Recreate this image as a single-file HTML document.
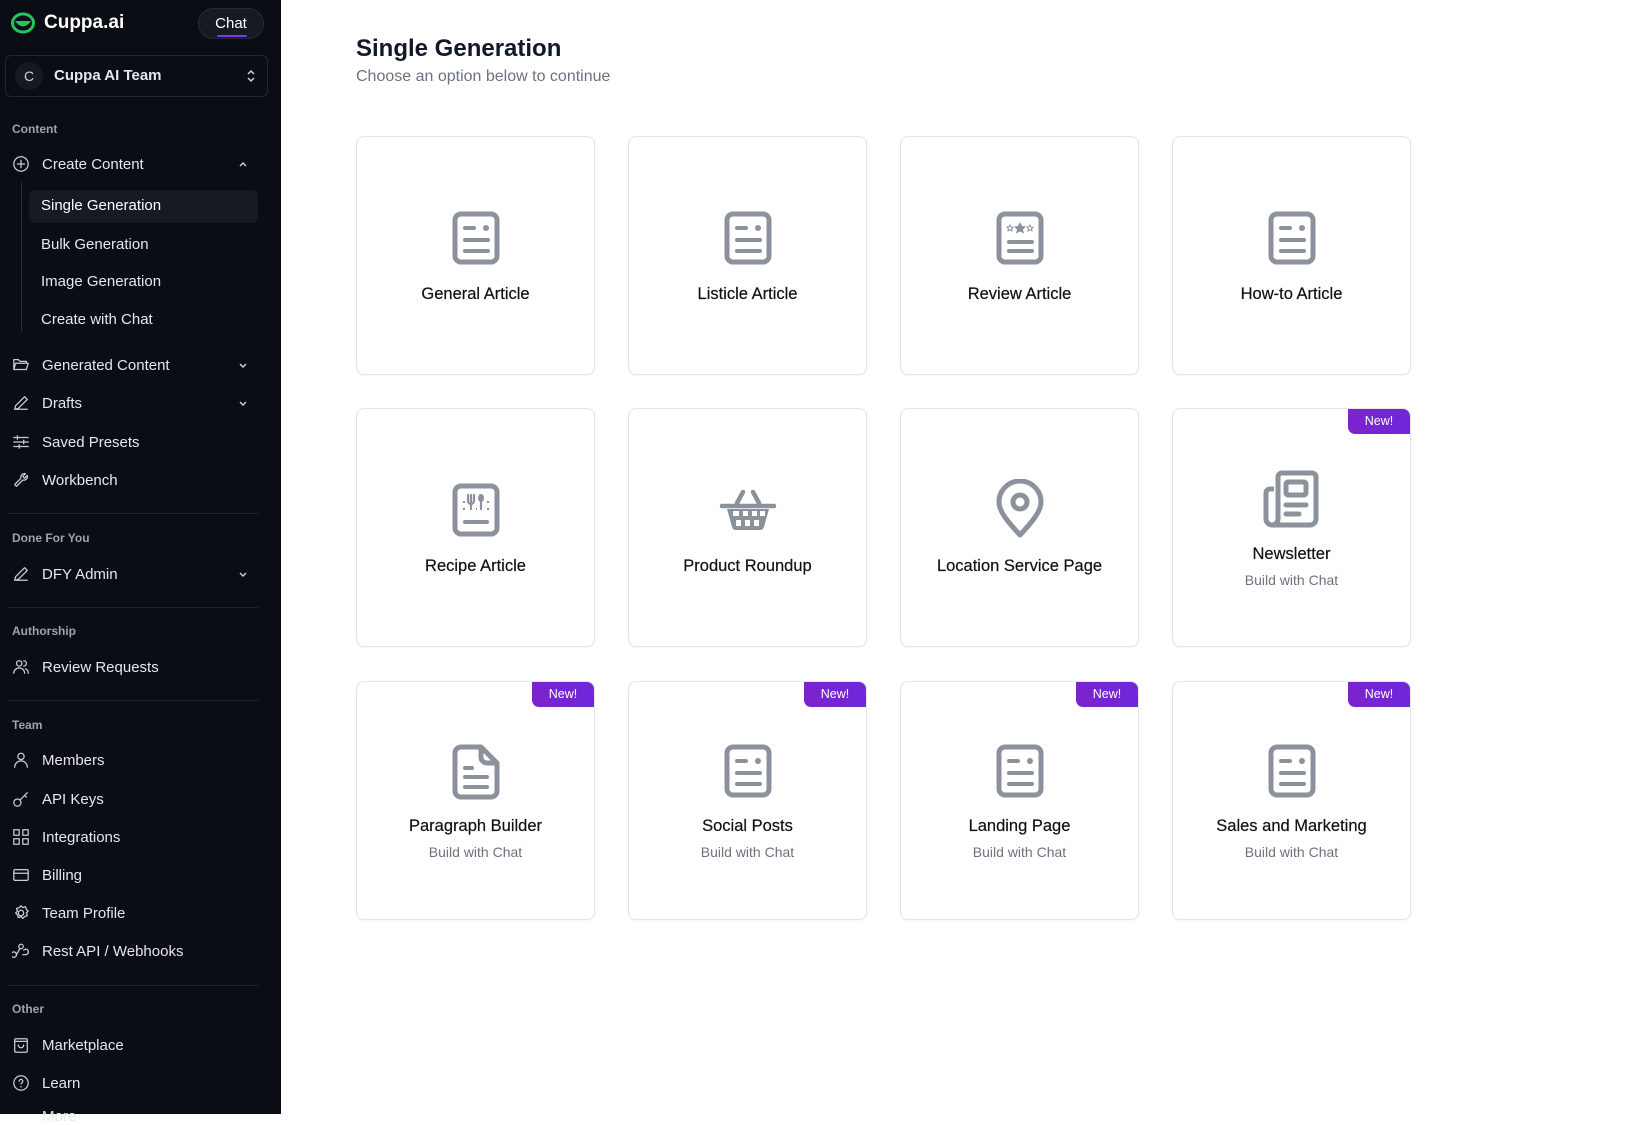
<!DOCTYPE html>
<html><head><meta charset="utf-8"><style>
*{box-sizing:border-box;margin:0;padding:0}
body{width:1634px;height:1114px;overflow:hidden;background:#fff;font-family:"Liberation Sans",sans-serif;position:relative}
#sb{position:absolute;left:0;top:0;width:281px;height:1114px;background:#0a0d14;color:#e5e7eb}
.it{position:absolute;left:12px;height:24px;display:flex;align-items:center;font-size:15px;color:#e5e7eb;transform:translateY(-12px)}
.it svg{width:18px;height:18px;margin-right:12px;stroke:#c9ccd2;fill:none;stroke-width:1.4;stroke-linecap:round;stroke-linejoin:round}
.sec{position:absolute;left:12px;font-size:12px;color:#9ca3af;transform:translateY(-8px);font-weight:bold}
.sub{position:absolute;left:41px;font-size:15px;color:#e5e7eb;transform:translateY(-9px)}
.div{position:absolute;left:8px;width:250px;height:1px;background:#1f2430}
.chev{position:absolute;left:238px;width:10px;height:10px}
.card{position:absolute;width:239px;height:239px;border:1px solid #e3e5e8;border-radius:8px;background:#fff;box-shadow:0 1px 2px rgba(0,0,0,.04);overflow:hidden}
.card svg.ic{position:absolute;left:50%;transform:translateX(-50%)}
.t{position:absolute;left:0;right:0;text-align:center;font-size:16.5px;color:#111;transform:translateY(-10px);-webkit-text-stroke:0.2px #111}
.s{position:absolute;left:0;right:0;text-align:center;font-size:14px;color:#6b7280;transform:translateY(-8px)}
.badge{position:absolute;right:0;top:0;width:62px;height:25px;background:linear-gradient(90deg,#7e22ce,#6d28d9);color:#fff;font-size:12.5px;text-align:center;line-height:25px;border-radius:0 7px 0 7px}
</style></head><body>
<div id="sb">
 <svg style="position:absolute;left:11px;top:12px" width="24" height="22" viewBox="0 0 24 22"><ellipse cx="12" cy="11" rx="10.5" ry="9" fill="none" stroke="#22c55e" stroke-width="3"/><path d="M4 9 Q12 20 20 9 Z" fill="#22c55e"/></svg>
 <div style="position:absolute;left:44px;top:12px;font-size:19px;font-weight:bold;color:#fff">Cuppa.ai</div>
 <div style="position:absolute;left:198px;top:8px;width:66px;height:31px;border-radius:16px;background:#161a23;border:1px solid #262b36;color:#fff;font-size:15px;text-align:center;line-height:29px">Chat<div style="position:absolute;left:18px;bottom:1px;width:30px;height:2px;background:#7c3aed;border-radius:2px"></div></div>
 <div style="position:absolute;left:5px;top:55px;width:263px;height:42px;border:1px solid #232834;border-radius:6px">
  <div style="position:absolute;left:9px;top:6px;width:28px;height:28px;border-radius:14px;background:#151922;color:#cfd2d8;font-size:14px;text-align:center;line-height:28px">C</div>
  <div style="position:absolute;left:48px;top:11px;font-size:15px;font-weight:bold;color:#e5e7eb">Cuppa AI Team</div>
  <svg style="position:absolute;left:240px;top:12px" width="10" height="16" viewBox="0 0 10 16" fill="none" stroke="#cfd2d8" stroke-width="1.5"><path d="M2 6l3-3 3 3M2 10l3 3 3-3"/></svg>
 </div>
 <div class="sec" style="top:130px">Content</div>
 <div class="it" style="top:164px"><svg viewBox="0 0 20 20"><circle cx="10" cy="10" r="8"/><path d="M10 6v8M6 10h8"/></svg>Create Content</div>
 <svg class="chev" style="top:159px" viewBox="0 0 10 10" fill="none" stroke="#cfd2d8" stroke-width="1.4"><path d="M2 7l3-3 3 3"/></svg>
 <div style="position:absolute;left:21px;top:182px;width:1px;height:150px;background:#262b36"></div>
 <div style="position:absolute;left:29px;top:190px;width:229px;height:33px;background:#161a23;border-radius:6px"></div>
 <div class="sub" style="top:206px;color:#fff">Single Generation</div>
 <div class="sub" style="top:245px">Bulk Generation</div>
 <div class="sub" style="top:282px">Image Generation</div>
 <div class="sub" style="top:320px">Create with Chat</div>
 <div class="it" style="top:365px"><svg viewBox="0 0 20 20"><path d="M2 15V4h5l2 2h7v2M2 15l2-7h14l-2 7z"/></svg>Generated Content</div>
 <svg class="chev" style="top:360px" viewBox="0 0 10 10" fill="none" stroke="#cfd2d8" stroke-width="1.4"><path d="M2 4l3 3 3-3"/></svg>
 <div class="it" style="top:403px"><svg viewBox="0 0 20 20"><path d="M3 17l1-4L14 3l3 3L7 16zM3 17h14"/></svg>Drafts</div>
 <svg class="chev" style="top:398px" viewBox="0 0 10 10" fill="none" stroke="#cfd2d8" stroke-width="1.4"><path d="M2 4l3 3 3-3"/></svg>
 <div class="it" style="top:442px"><svg viewBox="0 0 20 20"><path d="M2 5h16M2 10h16M2 15h16M6 3v4M13 8v4M8 13v4"/></svg>Saved Presets</div>
 <div class="it" style="top:480px"><svg viewBox="0 0 20 20"><path d="M17 5l-3 3-2-2 3-3a4 4 0 00-5 5l-7 7 2 2 7-7a4 4 0 005-5z"/></svg>Workbench</div>
 <div class="div" style="top:513px"></div>
 <div class="sec" style="top:539px">Done For You</div>
 <div class="it" style="top:574px"><svg viewBox="0 0 20 20"><path d="M3 17l1-4L14 3l3 3L7 16zM3 17h14"/></svg>DFY Admin</div>
 <svg class="chev" style="top:569px" viewBox="0 0 10 10" fill="none" stroke="#cfd2d8" stroke-width="1.4"><path d="M2 4l3 3 3-3"/></svg>
 <div class="div" style="top:607px"></div>
 <div class="sec" style="top:632px">Authorship</div>
 <div class="it" style="top:667px"><svg viewBox="0 0 20 20"><circle cx="8" cy="6" r="3"/><path d="M2 17a6 6 0 0112 0M13 3a3 3 0 010 6M15 12a5 5 0 013 5"/></svg>Review Requests</div>
 <div class="div" style="top:700px"></div>
 <div class="sec" style="top:726px">Team</div>
 <div class="it" style="top:760px"><svg viewBox="0 0 20 20"><circle cx="10" cy="6" r="3.5"/><path d="M3 18a7 7 0 0114 0"/></svg>Members</div>
 <div class="it" style="top:799px"><svg viewBox="0 0 20 20"><circle cx="6" cy="14" r="4"/><path d="M9 11l8-8M14 6l2 2"/></svg>API Keys</div>
 <div class="it" style="top:837px"><svg viewBox="0 0 20 20"><rect x="2" y="2" width="6" height="6"/><rect x="12" y="2" width="6" height="6"/><rect x="2" y="12" width="6" height="6"/><rect x="12" y="12" width="6" height="6"/></svg>Integrations</div>
 <div class="it" style="top:875px"><svg viewBox="0 0 20 20"><rect x="2" y="4" width="16" height="12" rx="1.5"/><path d="M2 8h16"/></svg>Billing</div>
 <div class="it" style="top:913px"><svg viewBox="0 0 20 20"><circle cx="10" cy="10" r="3"/><path d="M10 2l2 2 3-1 1 3 2 2-2 2 1 3-3 1-2 2-2-2-3 1-1-3-2-2 2-2-1-3 3-1z"/></svg>Team Profile</div>
 <div class="it" style="top:951px"><svg viewBox="0 0 20 20"><circle cx="10" cy="5" r="2.5"/><path d="M9 7l-4 7M5 14a3 3 0 100 .1M12 14h3a3 3 0 10-2-5"/></svg>Rest API / Webhooks</div>
 <div class="div" style="top:985px"></div>
 <div class="sec" style="top:1010px">Other</div>
 <div class="it" style="top:1045px"><svg viewBox="0 0 20 20"><rect x="3" y="3" width="14" height="15" rx="1.5"/><path d="M3 6h14M7 10a3 3 0 006 0"/></svg>Marketplace</div>
 <div class="it" style="top:1083px"><svg viewBox="0 0 20 20"><circle cx="10" cy="10" r="8"/><path d="M8 8a2 2 0 114 0c0 2-2 2-2 3M10 14v.5"/></svg>Learn</div>
 <div style="position:absolute;left:42px;top:1108px;font-size:15px;color:#e5e7eb">More</div>
</div>

<div style="position:absolute;left:356px;top:35px;font-size:24px;font-weight:bold;color:#111827">Single Generation</div>
<div style="position:absolute;left:356px;top:68px;font-size:16px;color:#6b7280">Choose an option below to continue</div>

<svg width="0" height="0" style="position:absolute">
<defs>
<g id="doc"><rect x="3" y="3" width="42" height="48" rx="6" fill="none" stroke="#8b929c" stroke-width="5"/></g>
</defs></svg>

<!-- Row 1 -->
<div class="card" style="left:356px;top:136px"><svg class="ic" style="top:74px" width="48" height="54" viewBox="0 0 48 54"><use href="#doc"/><path d="M13 17h9M13 29h23M13 40h23" stroke="#8b929c" stroke-width="4" stroke-linecap="round"/><circle cx="34" cy="17" r="3" fill="#8b929c"/></svg><div class="t" style="top:158px">General Article</div></div>
<div class="card" style="left:628px;top:136px"><svg class="ic" style="top:74px" width="48" height="54" viewBox="0 0 48 54"><use href="#doc"/><path d="M13 17h9M13 29h23M13 40h23" stroke="#8b929c" stroke-width="4" stroke-linecap="round"/><circle cx="34" cy="17" r="3" fill="#8b929c"/></svg><div class="t" style="top:158px">Listicle Article</div></div>
<div class="card" style="left:900px;top:136px"><svg class="ic" style="top:74px" width="48" height="54" viewBox="0 0 48 54"><use href="#doc"/><path d="M24 11l2 4 4 .5-3 3 1 4-4-2-4 2 1-4-3-3 4-.5z" fill="#8b929c"/><path d="M14 14l1 2 2 .3-1.5 1.5.5 2-2-1-2 1 .5-2L11 16l2-.3zM34 14l1 2 2 .3-1.5 1.5.5 2-2-1-2 1 .5-2L31 16l2-.3z" fill="none" stroke="#8b929c" stroke-width="1"/><path d="M13 31h23M13 40h23" stroke="#8b929c" stroke-width="4" stroke-linecap="round"/></svg><div class="t" style="top:158px">Review Article</div></div>
<div class="card" style="left:1172px;top:136px"><svg class="ic" style="top:74px" width="48" height="54" viewBox="0 0 48 54"><use href="#doc"/><path d="M13 17h9M13 29h23M13 40h23" stroke="#8b929c" stroke-width="4" stroke-linecap="round"/><circle cx="34" cy="17" r="3" fill="#8b929c"/></svg><div class="t" style="top:158px">How-to Article</div></div>

<!-- Row 2 -->
<div class="card" style="left:356px;top:408px"><svg class="ic" style="top:74px" width="48" height="54" viewBox="0 0 48 54"><use href="#doc"/><path d="M19 12v14M16 12v6a3 3 0 006 0v-6M29 17v9" stroke="#8b929c" stroke-width="2.2" fill="none" stroke-linecap="round"/><ellipse cx="29" cy="15" rx="3" ry="4" fill="#8b929c"/><path d="M11 19h2M35 19h2M11 26h2M35 26h2M24 26h1" stroke="#8b929c" stroke-width="2"/><path d="M13 39h22" stroke="#8b929c" stroke-width="4" stroke-linecap="round"/></svg><div class="t" style="top:158px">Recipe Article</div></div>
<div class="card" style="left:628px;top:408px"><svg class="ic" style="top:74px" width="60" height="54" viewBox="0 0 60 54"><path d="M19 20l6-11M41 20l-6-11" stroke="#8b929c" stroke-width="4.5" stroke-linecap="round"/><path d="M4 23h52" stroke="#8b929c" stroke-width="4.5" stroke-linecap="round"/><path d="M9 26h42l-5 18a4 4 0 01-4 3H18a4 4 0 01-4-3z" fill="#8b929c"/><g fill="#fff"><rect x="15" y="28" width="6" height="5"/><rect x="25" y="28" width="5" height="5"/><rect x="34" y="28" width="5" height="5"/><rect x="42" y="28" width="5" height="5"/><rect x="18" y="37" width="5" height="6"/><rect x="27" y="37" width="5" height="6"/><rect x="36" y="37" width="5" height="6"/></g></svg><div class="t" style="top:158px">Product Roundup</div></div>
<div class="card" style="left:900px;top:408px"><svg class="ic" style="top:70px" width="50" height="60" viewBox="0 0 50 60"><path d="M25 56C14 44 4 33 4 23a21 21 0 0142 0c0 10-10 21-21 33z" fill="none" stroke="#8b929c" stroke-width="5" stroke-linejoin="round"/><circle cx="25" cy="23" r="7" fill="none" stroke="#8b929c" stroke-width="5"/></svg><div class="t" style="top:158px">Location Service Page</div></div>
<div class="card" style="left:1172px;top:408px"><div class="badge">New!</div><svg class="ic" style="top:60px" width="60" height="60" viewBox="0 0 60 60"><path d="M12 20H8a4 4 0 00-4 4v26a6 6 0 0012 0V8a4 4 0 014-4h30a4 4 0 014 4v42a6 6 0 01-6 6H10" fill="none" stroke="#8b929c" stroke-width="5" stroke-linejoin="round"/><rect x="24" y="13" width="20" height="13" rx="2" fill="none" stroke="#8b929c" stroke-width="5"/><path d="M24 36h20M24 45h13" stroke="#8b929c" stroke-width="5" stroke-linecap="round"/></svg><div class="t" style="top:146px">Newsletter</div><div class="s" style="top:171px">Build with Chat</div></div>

<!-- Row 3 -->
<div class="card" style="left:356px;top:681px"><div class="badge">New!</div><svg class="ic" style="top:62px" width="48" height="56" viewBox="0 0 48 56"><path d="M9 3h20l16 16v28a6 6 0 01-6 6H9a6 6 0 01-6-6V9a6 6 0 016-6z" fill="none" stroke="#8b929c" stroke-width="5" stroke-linejoin="round"/><path d="M29 3v10a6 6 0 006 6h10" fill="none" stroke="#8b929c" stroke-width="5"/><path d="M13 24h7M13 33h22M13 43h22" stroke="#8b929c" stroke-width="4" stroke-linecap="round"/></svg><div class="t" style="top:145px">Paragraph Builder</div><div class="s" style="top:170px">Build with Chat</div></div>
<div class="card" style="left:628px;top:681px"><div class="badge">New!</div><svg class="ic" style="top:62px" width="48" height="54" viewBox="0 0 48 54"><use href="#doc"/><path d="M13 17h9M13 29h23M13 40h23" stroke="#8b929c" stroke-width="4" stroke-linecap="round"/><circle cx="34" cy="17" r="3" fill="#8b929c"/></svg><div class="t" style="top:145px">Social Posts</div><div class="s" style="top:170px">Build with Chat</div></div>
<div class="card" style="left:900px;top:681px"><div class="badge">New!</div><svg class="ic" style="top:62px" width="48" height="54" viewBox="0 0 48 54"><use href="#doc"/><path d="M13 17h9M13 29h23M13 40h23" stroke="#8b929c" stroke-width="4" stroke-linecap="round"/><circle cx="34" cy="17" r="3" fill="#8b929c"/></svg><div class="t" style="top:145px">Landing Page</div><div class="s" style="top:170px">Build with Chat</div></div>
<div class="card" style="left:1172px;top:681px"><div class="badge">New!</div><svg class="ic" style="top:62px" width="48" height="54" viewBox="0 0 48 54"><use href="#doc"/><path d="M13 17h9M13 29h23M13 40h23" stroke="#8b929c" stroke-width="4" stroke-linecap="round"/><circle cx="34" cy="17" r="3" fill="#8b929c"/></svg><div class="t" style="top:145px">Sales and Marketing</div><div class="s" style="top:170px">Build with Chat</div></div>
</body></html>
